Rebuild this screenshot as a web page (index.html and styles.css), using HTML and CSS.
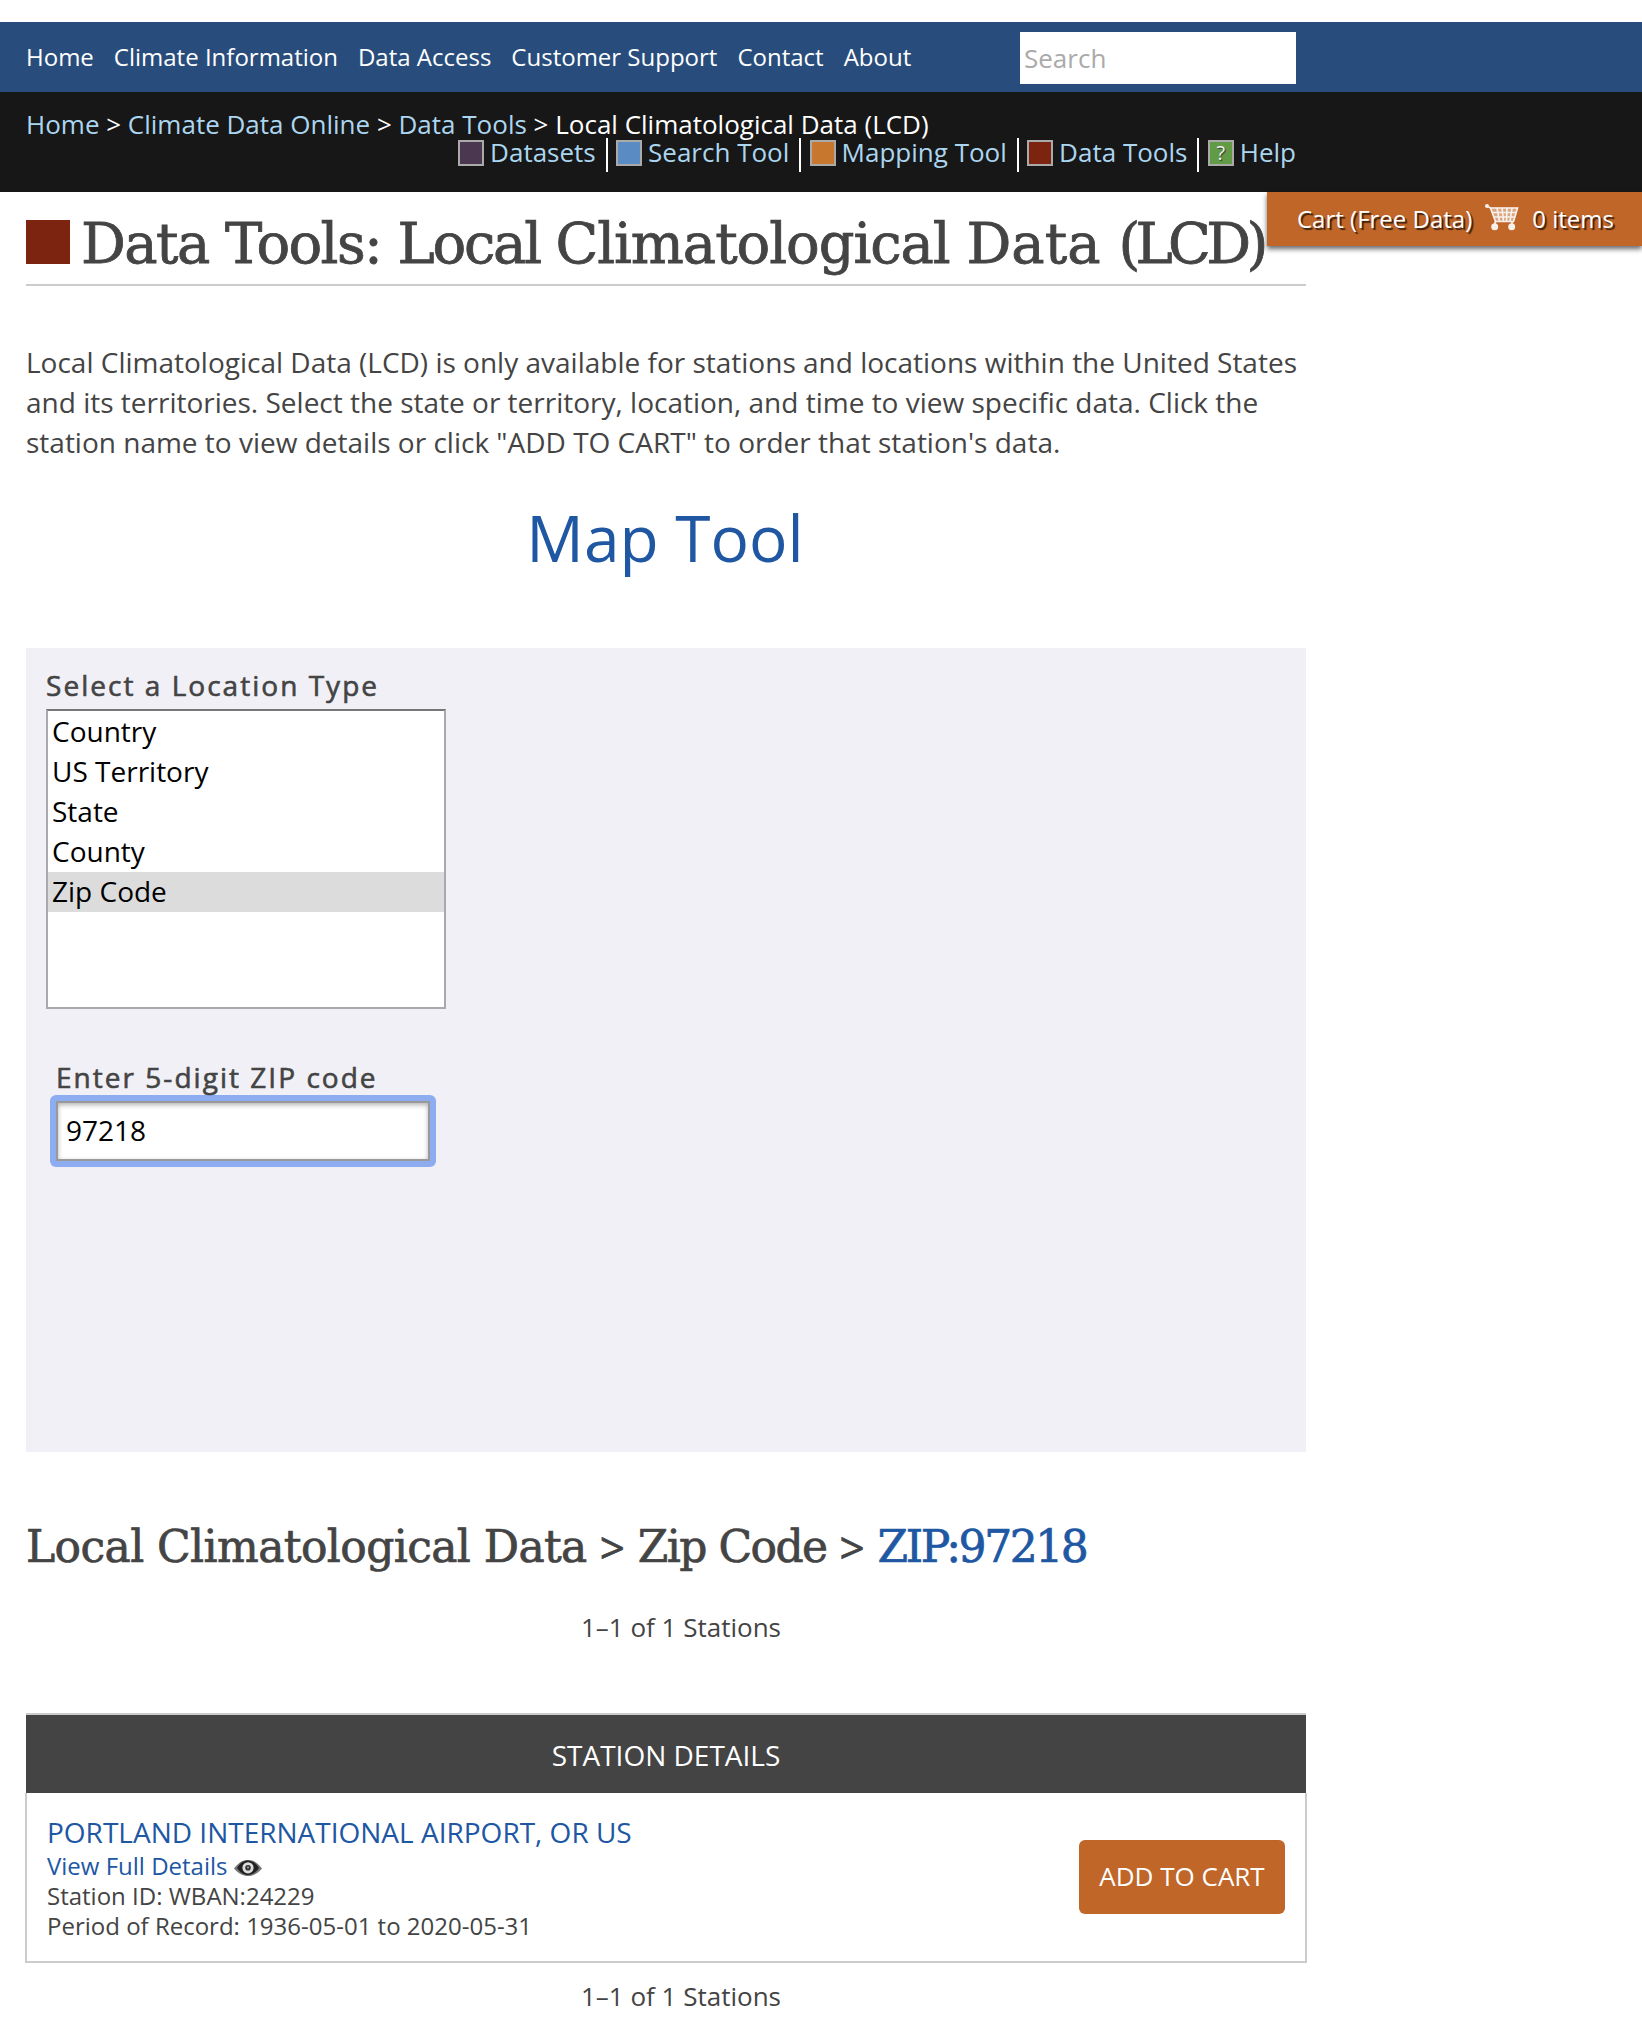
FILE: index.html
```html
<!DOCTYPE html>
<html lang="en">
<head>
<meta charset="utf-8">
<title>Data Tools: Local Climatological Data (LCD)</title>
<link rel="stylesheet" href="styles.css">
</head>
<body>
<nav class="topnav">
  <div class="links"><a>Home</a><a>Climate Information</a><a>Data Access</a><a>Customer Support</a><a>Contact</a><a>About</a></div>
  <input class="search" type="text" placeholder="Search" aria-label="Search">
</nav>
<header class="subhead">
  <div class="crumbs"><a>Home</a> &gt; <a>Climate Data Online</a> &gt; <a>Data Tools</a> &gt; Local Climatological Data (LCD)</div>
  <div class="tools">
    <a class="tool"><i class="sq purple"></i>Datasets</a>
    <a class="tool"><i class="sq blue"></i>Search Tool</a>
    <a class="tool"><i class="sq orange"></i>Mapping Tool</a>
    <a class="tool"><i class="sq red"></i>Data Tools</a>
    <a class="tool"><i class="sq green">?</i>Help</a>
  </div>
  <div class="cart">
    <span>Cart (Free Data)</span>
    <svg class="cart-icon" viewBox="0 0 34 27" width="34" height="27">
      <path d="M5 3.500h28l-4 14.500H10z" fill="#fff" opacity=".45"/>
      <g fill="none" stroke="#fff" stroke-width="1.700">
        <path d="M2 2l3.500 2h27L28.500 17.500h-18L5.500 4"/>
        <path d="M7 8.500h24.500M9 13h21M12 4l2.500 13.500M17 4l1.500 13.500M22 4l-.500 13.500M27 4l-2 13.500"/>
        <path d="M10.500 17.500l-1 4M27 17.500v4"/>
      </g>
      <circle cx="2" cy="2" r="2" fill="#fff"/><circle cx="9.700" cy="22.700" r="3.500" fill="#fff"/><circle cx="26.700" cy="22.700" r="3.500" fill="#fff"/>
    </svg>
    <span>0 items</span>
  </div>
</header>
<main class="content">
  <h1 class="title"><i class="title-mark"></i><span class="title-text">Data Tools: <span class="w-local">Local </span><span class="w-clim">Climatological </span><span class="w-data">Data </span><span class="w-lcd">(LCD)</span></span></h1>
  <p class="intro">Local Climatological Data (LCD) is only available for stations and locations within the United States<br>and its territories. Select the state or territory, location, and time to view specific data. Click the<br>station name to view details or click "ADD TO CART" to order that station's data.</p>
  <a class="maptool">Map Tool</a>
  <section class="panel">
    <div class="label">Select a Location Type</div>
    <div class="listbox" role="listbox">
      <div>Country</div><div>US Territory</div><div>State</div><div>County</div><div class="selected">Zip Code</div>
    </div>
    <div class="zip">
      <label class="label" for="zip">Enter 5-digit ZIP code</label>
      <div class="focus-ring"><input class="zip-input" id="zip" type="text" value="97218"></div>
    </div>
  </section>
  <h2 class="results"><span class="dataset">Local Climatological Data</span><span class="gt"> &gt; </span><span>Zip Code</span><span class="gt"> &gt; </span><a>ZIP:97218</a></h2>
  <div class="count">1–1 of 1 Stations</div>
  <section class="stations">
    <div class="stations-head">STATION DETAILS</div>
    <div class="station">
      <div>
        <a class="name">PORTLAND INTERNATIONAL AIRPORT, OR US</a>
        <div class="line"><a>View Full Details</a>
          <svg class="eye" viewBox="0 0 28 16" width="28" height="16"><path d="M0 8.500C5 2 9 0 14 0s9 2 14 8.500C23 14 19 16 14 16S5 14 0 8.500z" fill="#777"/><path d="M3 8C6 3 10 .600 14 .600S22 3 25 8c-3 4.500-7 7-11 7S6 12.500 3 8z" fill="#222"/><circle cx="14" cy="7.800" r="5.600" fill="#ddd"/><circle cx="14" cy="7.800" r="2.800" fill="#333"/><circle cx="14" cy="7.500" r="1" fill="#aaa"/></svg>
        </div>
        <div class="line">Station ID: WBAN:24229</div>
        <div class="line">Period of Record: 1936-05-01 to 2020-05-31</div>
      </div>
      <button class="add">ADD TO CART</button>
    </div>
  </section>
  <div class="count last">1–1 of 1 Stations</div>
</main>
</body>
</html>
```
FILE: styles.css
```css
* { box-sizing: border-box; }
body { margin: 0; padding-top: 22px; height: 2030px; overflow: hidden; background: #fff; color: #444; font-family: "Open Sans", sans-serif; font-size: 28px; }
input, button { font-family: inherit; }
.topnav { height: 70px; background: #284d7c; display: flex; align-items: center; padding-left: 26px; }
.links { display: flex; gap: 20px; width: 994px; color: #fff; font-size: 24px; line-height: 70px; white-space: nowrap; }
.search { width: 276px; height: 52px; margin-top: 2px; border: 0; padding: 0 4px; font-size: 26px; background: #fff; }
.search::placeholder { color: #aaa; opacity: 1; }
.subhead { position: relative; height: 100px; background: #171717; padding: 18px 346px 0 26px; font-size: 26px; line-height: 28px; color: #fff; }
.crumbs a, .tool { color: #acd6ef; }
.crumbs { white-space: nowrap; }
.tools { display: flex; justify-content: flex-end; }
.tool { display: flex; height: 34px; padding-right: 10px; margin-right: 8.3px; border-right: 2px solid #fff; white-space: nowrap; }
.tool:last-child { border: 0; margin: 0; padding: 0; }
.sq { width: 26px; height: 26px; margin: 2px 6px 0 0; border: 2px solid #aaa; font: 400 20px/22px "Open Sans", sans-serif; color: #eee; text-align: center; text-shadow: 1px 1px 1px #333; }
.purple { background: #4b3850; }
.blue { background: #5b8bc3; }
.orange { background: #c7772e; }
.red { background: #7c240f; }
.green { background: #629b46; }
.cart { position: absolute; top: 100px; right: 0; width: 375px; height: 54px; padding-left: 30px; background: #c06628; box-shadow: 0 3px 5px rgba(0,0,0,.6); display: flex; align-items: center; font-size: 24px; text-shadow: 2px 2px 1px rgba(0,0,0,.7); white-space: nowrap; }
.cart-icon { margin: 0 13px 3px 13px; opacity: .9; }
.content { width: 1306px; padding-left: 26px; }
.title { display: flex; align-items: center; gap: 11px; height: 94px; margin: 0; padding-top: 10px; border-bottom: 2px solid #ccc; font: 400 56px/82px "DejaVu Serif", serif; white-space: nowrap; letter-spacing: -1.6px; -webkit-text-stroke: .8px; }
.title-text { padding-top: 2px; }
.w-local { letter-spacing: -2.25px; }
.w-clim { letter-spacing: -1.08px; }
.w-data { letter-spacing: 0; }
.w-lcd { letter-spacing: -4.7px; }
.title-mark { width: 44px; height: 44px; background: #7c240f; flex: none; margin-bottom: 2px; }
.intro { margin: 56px 0 110px; line-height: 40px; white-space: nowrap; height: 40px; }
.maptool { display: block; height: 90px; padding-right: 2px; line-height: 92px; font-size: 64px; text-align: center; color: #2057a3; }
.panel { margin-top: 66px; height: 804px; padding: 17px 20px; background: #f0f0f6; }
.label { display: block; letter-spacing: 2.03px; line-height: 40px; white-space: nowrap; -webkit-text-stroke: .6px; }
.listbox { width: 400px; height: 300px; margin-top: 4px; padding-top: 1px; border: 2px solid #a9a9ab; border-top-color: #777; background: #fff; color: #000; line-height: 38px; }
.listbox div { padding: 0 0 2px 4px; }
.selected { background: #dcdcdc; }
.zip { margin: 50px 0 0 10px; }
.zip .label { line-height: 36px; }
.focus-ring { width: 386px; margin-left: -6px; padding: 6px; border-radius: 6px; background: #8eacf0; }
.zip-input { display: block; width: 374px; height: 60px; padding: 0 8px 2px; border: 2px solid #999; outline: 0; box-shadow: inset 0 2px 5px rgba(0,0,0,.3); border-radius: 0; font-size: 28px; color: #000; }
.results { display: flex; margin: 65px 0 -1px; font: 400 44px/60px "DejaVu Serif", serif; white-space: nowrap; letter-spacing: -1.54px; -webkit-text-stroke: .7px; }
.dataset { letter-spacing: -.6px; }
.gt { width: 51px; text-align: center; font-family: "Open Sans", sans-serif; letter-spacing: 0; }
.results a, .station a { color: #2057a3; }
.results a { letter-spacing: -2.45px; }
.count { margin-top: 31px; padding-left: 30px; line-height: 40px; font-size: 26px; text-align: center; }
.stations { margin: 66px -1px 0; }
.stations-head { margin: 0 1px; height: 80px; border-top: 2px solid #ccc; background: #444; color: #fff; text-align: center; line-height: 80px; }
.station { height: 170px; border: 2px solid #ccc; border-top: 0; display: flex; justify-content: space-between; padding: 21px 20px 0; }
.name { display: block; line-height: 37px; white-space: nowrap; }
.line { font-size: 24px; line-height: 30px; display: flex; white-space: nowrap; }
.eye { margin: 9px 0 0 7px; }
.add { width: 206px; height: 74px; margin-top: 26px; padding: 0 0 2px; border: 0; border-radius: 6px; background: #c06628; color: #fff; font-size: 26px; }
.last { margin-top: 13px; }
```
